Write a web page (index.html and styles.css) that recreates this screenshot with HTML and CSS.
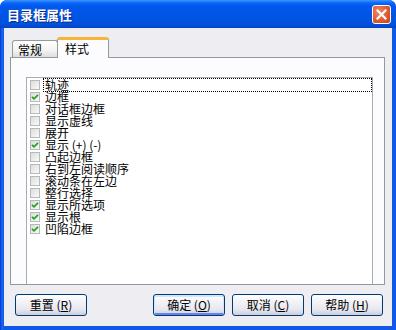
FILE: index.html
```html
<!DOCTYPE html>
<html>
<head>
<meta charset="utf-8">
<link rel="stylesheet" href="styles.css">
</head>
<body>
<div class="window">
  <div class="titlebar">
    <span class="title">目录框属性</span>
    <div class="close"><svg width="11" height="11" viewBox="0 0 11 11"><path d="M1.5 1.5 L9.5 9.5 M9.5 1.5 L1.5 9.5" stroke="#fff" stroke-width="2.2" stroke-linecap="square"/></svg></div>
  </div>
  <div class="content">
    <div class="tabs">
      <div class="tab">常规</div>
      <div class="tab active">样式</div>
    </div>
    <div class="panel">
      <div class="listbox">
        <div class="row"><span class="cb"></span><span class="label focus">轨迹</span></div>
        <div class="row"><span class="cb on"><svg width="8" height="8" viewBox="0 0 8 8"><path d="M1 3.8 L3 5.8 L7 1.8" fill="none" stroke="#21a121" stroke-width="1.7"/></svg></span><span class="label">边框</span></div>
        <div class="row"><span class="cb"></span><span class="label">对话框边框</span></div>
        <div class="row"><span class="cb"></span><span class="label">显示虚线</span></div>
        <div class="row"><span class="cb"></span><span class="label">展开</span></div>
        <div class="row"><span class="cb on"><svg width="8" height="8" viewBox="0 0 8 8"><path d="M1 3.8 L3 5.8 L7 1.8" fill="none" stroke="#21a121" stroke-width="1.7"/></svg></span><span class="label">显示 (+) (-)</span></div>
        <div class="row"><span class="cb"></span><span class="label">凸起边框</span></div>
        <div class="row"><span class="cb"></span><span class="label">右到左阅读顺序</span></div>
        <div class="row"><span class="cb"></span><span class="label">滚动条在左边</span></div>
        <div class="row"><span class="cb"></span><span class="label">整行选择</span></div>
        <div class="row"><span class="cb on"><svg width="8" height="8" viewBox="0 0 8 8"><path d="M1 3.8 L3 5.8 L7 1.8" fill="none" stroke="#21a121" stroke-width="1.7"/></svg></span><span class="label">显示所选项</span></div>
        <div class="row"><span class="cb on"><svg width="8" height="8" viewBox="0 0 8 8"><path d="M1 3.8 L3 5.8 L7 1.8" fill="none" stroke="#21a121" stroke-width="1.7"/></svg></span><span class="label">显示根</span></div>
        <div class="row"><span class="cb on"><svg width="8" height="8" viewBox="0 0 8 8"><path d="M1 3.8 L3 5.8 L7 1.8" fill="none" stroke="#21a121" stroke-width="1.7"/></svg></span><span class="label">凹陷边框</span></div>
      </div>
    </div>
    <div class="buttons">
      <div class="btn">重置 (<u>R</u>)</div>
      <div class="spacer"></div>
      <div class="btn default">确定 (<u>O</u>)</div>
      <div class="btn">取消 (<u>C</u>)</div>
      <div class="btn">帮助 (<u>H</u>)</div>
    </div>
  </div>
</div>
</body>
</html>
```
FILE: styles.css
```css
html, body {
  margin: 0;
  padding: 0;
  width: 396px;
  height: 330px;
  overflow: hidden;
  background: #ffffff;
}

.window {
  width: 396px;
  height: 330px;
  box-sizing: border-box;
  display: flex;
  flex-direction: column;
  background: linear-gradient(90deg, #0831d9 0, #166aee 2px, #1158e8 4px);
  border-radius: 7px 7px 0 0;
  font-family: "Noto Sans CJK SC", "Liberation Sans", sans-serif;
  font-size: 12px;
  color: #000;
}

.titlebar {
  height: 28px;
  flex: none;
  display: flex;
  align-items: center;
  padding: 0 5px 0 7px;
  border-radius: 7px 7px 0 0;
  background: linear-gradient(#3d95ff 0, #0a66f6 3px, #0058ee 6px, #0055e5 50%, #0052dc 85%, #0043c6 100%);
}

.title {
  color: #fff;
  font-weight: bold;
  font-size: 13px;
  line-height: 14px;
  text-shadow: 1px 1px 0 #0a2a8a;
  padding-top: 1px;
}

.close {
  margin-left: auto;
  width: 19px;
  height: 19px;
  box-sizing: border-box;
  border: 1px solid #fff;
  border-radius: 3px;
  background: radial-gradient(circle at 35% 35%, #f08a68 0, #e25a30 55%, #c8401a 100%);
  display: flex;
  align-items: center;
  justify-content: center;
  margin-top: 1px;
}

.close svg { display: block; }

.content {
  flex: 1;
  margin: 0 4px 4px 4px;
  background: #eeeef2;
  display: flex;
  flex-direction: column;
}

.tabs {
  display: flex;
  align-items: flex-end;
  height: 20px;
  margin-top: 9px;
  padding-left: 8px;
  position: relative;
  z-index: 2;
}

.tab {
  height: 17px;
  width: 46px;
  box-sizing: border-box;
  border: 1px solid #919b9c;
  border-bottom: none;
  border-radius: 3px 3px 0 0;
  background: linear-gradient(#ffffff, #f3f3f0 60%, #dcdce4);
  padding-left: 5px;
  line-height: 17px;
}

.tab.active {
  height: 21px;
  width: 52px;
  margin-bottom: -1px;
  margin-left: -1px;
  padding-left: 7px;
  line-height: 18px;
  background: #fcfcfe;
  border-top: 3px solid #f8b33a;
  border-radius: 3px 3px 0 0;
}

.panel {
  margin-left: 6px;
  margin-right: 7px;
  height: 228px;
  box-sizing: border-box;
  border: 1px solid #919b9c;
  background: #fcfcfe;
  padding: 19px 11px 0 15px;
  overflow: hidden;
  position: relative;
  z-index: 1;
}

.listbox {
  height: 260px;
  border: 1px solid #a5acb5;
  background: #fff;
  padding-top: 1px;
}

.row {
  height: 12px;
  display: flex;
  align-items: center;
  padding-left: 3px;
  line-height: 12px;
}

.cb {
  width: 10px;
  height: 10px;
  box-sizing: border-box;
  border: 1px solid #b5b8bc;
  background: linear-gradient(135deg, #dcdcd7, #fafafa);
  flex: none;
  display: flex;
  align-items: center;
  justify-content: center;
}

.cb svg { display: block; }

.label {
  flex: 1;
  height: 12px;
  margin-left: 4px;
  margin-right: 1px;
  padding-left: 1px;
  white-space: nowrap;
}

.label.focus {
  outline: 1px dotted #000;
  outline-offset: 0;
}

.buttons {
  display: flex;
  margin-top: 9px;
  padding: 0 9px 0 11px;
  gap: 7px;
}

.spacer { flex: 1; }

.btn {
  width: 72px;
  height: 22px;
  box-sizing: border-box;
  border: 1px solid #003c74;
  border-radius: 3px;
  background: linear-gradient(#ffffff 0, #f4f4f8 30%, #e6e6ee 75%, #c9cedb 100%);
  display: flex;
  align-items: center;
  justify-content: center;
  line-height: 12px;
}

.btn u { text-decoration: underline; }

.btn.default {
  box-shadow: inset 0 1px 0 1px #cee7ff, inset 0 -1px 0 1px #6982ee;
}
```
